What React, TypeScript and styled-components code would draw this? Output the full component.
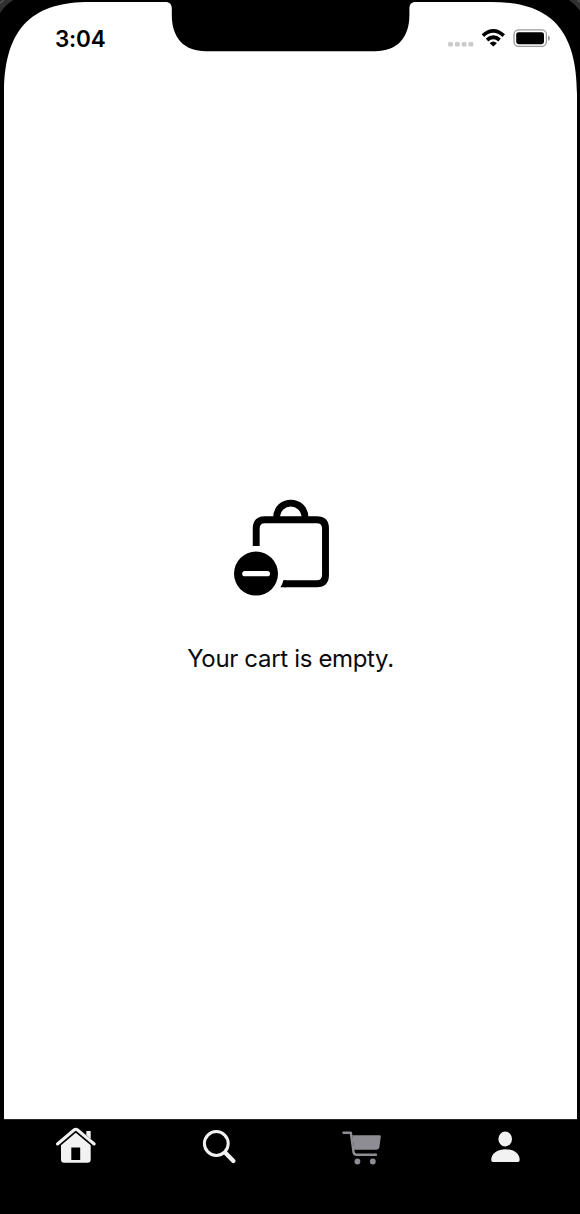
import React from "react";
import styled, { createGlobalStyle } from "styled-components";

const GlobalStyle = createGlobalStyle`
  * { box-sizing: border-box; }
  body {
    margin: 0;
    background: #000;
    font-family: Inter, "Liberation Sans", sans-serif;
  }
`;

const Device = styled.div`
  position: relative;
  width: 580px;
  height: 1214px;
  padding: 2px 3px 0 4px;
  background: #000;
  display: flex;
  flex-direction: column;
  overflow: hidden;
`;

const Bezel = styled.svg`
  position: absolute;
  top: 0;
  left: 0;
  pointer-events: none;
`;

const StatusBar = styled.header`
  height: 72px;
  padding: 0 27px 0 51px;
  background: #fff;
  display: flex;
  align-items: center;
  justify-content: space-between;
`;

const Clock = styled.time`
  padding-top: 2px;
  font-size: 22.5px;
  font-weight: 560;
  line-height: 28px;
  letter-spacing: -0.2px;
  color: #000;
`;

const StatusIcons = styled.div`
  display: flex;
  align-items: center;
`;

const EmptyCart = styled.main`
  flex: 1;
  background: #fff;
  display: flex;
  flex-direction: column;
  align-items: center;
  padding-top: 425px;
`;

const BagIcon = styled.svg`
  margin-right: 18px;
`;

const Message = styled.p`
  margin: 46px 0 0;
  font-size: 24px;
  line-height: 32px;
  letter-spacing: -0.33px;
  color: #0a0a0a;
  white-space: nowrap;
`;

const TabBar = styled.nav`
  height: 95px;
  border-top: 1px solid #2a2a2a;
  background: #000;
  display: grid;
  grid-template-columns: repeat(4, 1fr);
`;

const Tab = styled.button<{ $active?: boolean }>`
  height: 52px;
  padding: 6px 0 0;
  border: 0;
  background: none;
  color: ${(p) => (p.$active ? "#8e8d93" : "#f2f2f2")};
  display: flex;
  justify-content: center;
`;

export default function App() {
  return (
    <>
      <GlobalStyle />
      <Device>
        <StatusBar>
          <Clock>3:04</Clock>
          <StatusIcons>
            <svg width="104" height="24" viewBox="446 26 104 24">
              <g fill="#cbcbcb">
                <rect x="448" y="42" width="5" height="4.6" rx="1.5" />
                <rect x="454.8" y="42" width="5" height="4.6" rx="1.5" />
                <rect x="461.6" y="42" width="5" height="4.6" rx="1.5" />
                <rect x="468.4" y="42" width="5" height="4.6" rx="1.5" />
              </g>
              <g fill="none" stroke="#000" strokeWidth="3.7">
                <path d="M482.9 35.6 Q493.3 26.2 503.7 35.6" />
                <path d="M487 40 Q493.3 34.4 499.6 40" />
              </g>
              <path d="M489.7 43.2 Q493.3 40 496.9 43.2 L493.3 46.6Z" fill="#000" />
              <rect x="514" y="29.8" width="32.4" height="16.6" rx="4.6" fill="none" stroke="#999" strokeWidth="1.3" />
              <rect x="516.2" y="32.2" width="27.8" height="12" rx="2.4" fill="#000" />
              <path d="M548 35.5 Q550 36.3 550 38.2 Q550 40.1 548 40.9Z" fill="#999" />
            </svg>
          </StatusIcons>
        </StatusBar>

        <EmptyCart>
          <BagIcon width="96" height="98" viewBox="234 499 96 98">
            <g fill="none" stroke="#000" strokeWidth="6.9">
              <path d="M256.2 546 V528.5 Q256.2 519.8 265 519.8 H316.8 Q325.5 519.8 325.5 528.5 V575 Q325.5 583.8 316.8 583.8 H284" />
              <path d="M276.6 518 C276.6 498.2 305 498.2 305 518" />
            </g>
            <path d="M283.4 580.35 Q282.6 584 280.4 587.25 H286 V580.35Z" fill="#000" />
            <circle cx="256" cy="573.6" r="22" fill="#000" />
            <path d="M244.8 573.7 H267.4" stroke="#fff" strokeWidth="5.2" strokeLinecap="round" />
          </BagIcon>
          <Message>Your cart is empty.</Message>
        </EmptyCart>

        <TabBar>
          <Tab aria-label="Home">
            <svg width="42" height="40" viewBox="55 1126 42 40" fill="currentColor">
              <path d="M57.5 1144 L74 1130 Q75.8 1128.5 77.6 1130 L94.2 1144" fill="none" stroke="currentColor" strokeWidth="3" strokeLinecap="round" />
              <path d="M86.3 1135 V1131.6 Q86.3 1131 87 1131 H90 Q90.7 1131 90.7 1131.6 V1139Z" />
              <path fillRule="evenodd" d="M61 1145.2 L75.8 1132.8 L90.7 1145.2 V1159.5 Q90.7 1162.8 87.4 1162.8 H64.3 Q61 1162.8 61 1159.5Z M71.3 1147.6 V1160 H80.2 V1147.6Z" />
            </svg>
          </Tab>
          <Tab aria-label="Search">
            <svg width="42" height="40" viewBox="198 1126 42 40" fill="none" stroke="currentColor">
              <circle cx="216.3" cy="1143.5" r="11.9" strokeWidth="3" />
              <path d="M225.3 1152.7 L233.4 1161" strokeWidth="4.3" strokeLinecap="round" />
            </svg>
          </Tab>
          <Tab $active aria-label="Cart">
            <svg width="42" height="40" viewBox="341 1126 42 40" fill="currentColor">
              <path d="M343.5 1132.7 H350.8 L353.6 1152.3 Q354 1154.7 356.4 1154.7 H376" fill="none" stroke="currentColor" strokeWidth="2.4" strokeLinecap="round" strokeLinejoin="round" />
              <path d="M352.2 1135.3 H379.7 Q381 1135.3 380.8 1136.6 L379.4 1147 Q379 1149.8 376 1149.8 H354.2Z" />
              <circle cx="357.4" cy="1161.5" r="2.9" />
              <circle cx="372.8" cy="1161.5" r="2.9" />
            </svg>
          </Tab>
          <Tab aria-label="Profile">
            <svg width="42" height="40" viewBox="484 1126 42 40" fill="currentColor">
              <ellipse cx="505.2" cy="1139" rx="6.8" ry="7.4" />
              <path d="M491.2 1160 C491.2 1145.5 519.7 1145.5 519.7 1160 Q519.7 1161.9 517.8 1161.9 H493.1 Q491.2 1161.9 491.2 1160Z" />
            </svg>
          </Tab>
        </TabBar>

        <Bezel width="580" height="1214" viewBox="0 0 580 1214">
          <path d="M0 0 H90 V2 C36 2 4 24 4 94 H0Z" fill="#000" />
          <path d="M580 0 H491 V2 C545 2 577 24 577 94 H580Z" fill="#000" />
          <path d="M165 0 V2 C170 2 171.8 4.5 171.8 9 V15 C171.8 38 184 51.2 206 51.2 H375 C397 51.2 409.4 38 409.4 15 V9 C409.4 4.5 411 2 416 2 V0Z" fill="#000" />
          <path d="M0 0 H13.5 Q6 4 0 13Z" fill="#303030" />
          <path d="M0 3.5 L3.5 0" stroke="#777" strokeWidth="1" />
          <path d="M580 0 H569 Q575 4 580 11Z" fill="#303030" />
          <path d="M580 2.5 L577.5 0" stroke="#777" strokeWidth="1" />
        </Bezel>
      </Device>
    </>
  );
}
